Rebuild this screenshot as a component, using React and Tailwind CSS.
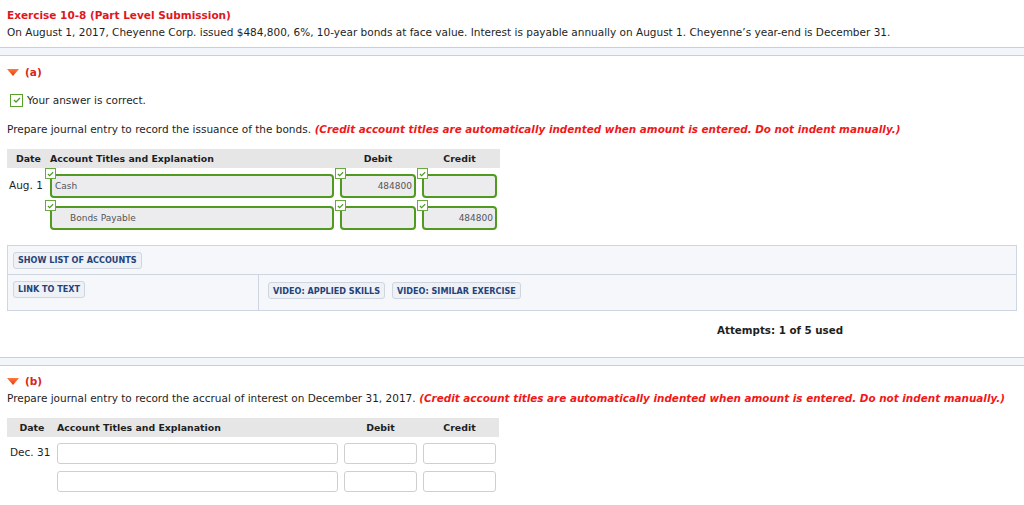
import { Fragment } from 'react';

function Tick({ className = 'w-[7px] h-[6px]' }) {
  return (
    <svg viewBox="0 0 8 6" className={className}>
      <path d="M1 3 L3 5 L7 1" fill="none" stroke="#4f9a25" strokeWidth="1.3" />
    </svg>
  );
}

function Badge() {
  return (
    <span className="absolute -left-[7px] -top-[8px] w-[11px] h-[11px] bg-white border border-[#6aa840] flex items-center justify-center">
      <Tick />
    </span>
  );
}

function Arrow({ label }) {
  return (
    <div className="flex items-center gap-[6px] px-[7px] h-[16px]">
      <svg viewBox="0 0 12 7" className="w-[12px] h-[7px]">
        <defs>
          <linearGradient id={'g' + label} x1="0" y1="0" x2="0" y2="1">
            <stop offset="0" stopColor="#ff7a3a" />
            <stop offset="1" stopColor="#e6360c" />
          </linearGradient>
        </defs>
        <path d="M0 0 L12 0 L6 7 Z" fill={'url(#g' + label + ')'} />
      </svg>
      <span className="font-bold text-[#d8241c]">({label})</span>
    </div>
  );
}

function Separator({ className = '' }) {
  return <div className={'h-[9px] border-y border-[#c6d0dc] bg-[#f2f5f9] ' + className} />;
}

function Note() {
  return (
    <span className="font-bold italic text-[#f01818] text-[10.4px]">
      {' '}(Credit account titles are automatically indented when amount is entered. Do not indent manually.)
    </span>
  );
}

function GreenBox({ className, children }) {
  return (
    <div className={'relative h-[24px] rounded-[4px] border-2 border-[#4f9a1f] bg-[#ececee] text-[9px] text-[#555] flex items-center ' + className}>
      <Badge />
      {children}
    </div>
  );
}

function PlainBox({ className }) {
  return <div className={'h-[21px] rounded-[3px] border border-[#cfcfcf] bg-white ' + className} />;
}

function Btn({ children }) {
  return (
    <span className="inline-flex items-center h-[17px] px-[4px] rounded-[3px] border border-[#cfd6df] bg-[#eef1f5] text-[8.1px] font-bold text-[#24427a]">
      {children}
    </span>
  );
}

export default function App() {
  const rowsA = [
    { date: 'Aug. 1', acct: 'Cash', indent: false, debit: '484800', credit: '' },
    { date: '', acct: 'Bonds Payable', indent: true, debit: '', credit: '484800' },
  ];

  return (
    <div className="w-[1024px] h-[505px] overflow-hidden bg-white text-[10.5px] leading-[16px] text-[#1e1e1e] font-['DejaVu_Sans','Liberation_Sans',sans-serif]">
      {/* header */}
      <div className="px-[7px] pt-[7px]">
        <div className="font-bold text-[#e0161c]">Exercise 10-8 (Part Level Submission)</div>
        <div className="mt-[1px]">
          On August 1, 2017, Cheyenne Corp. issued $484,800, 6%, 10-year bonds at face value. Interest is payable annually on August 1. Cheyenne’s year-end is December 31.
        </div>
      </div>

      <Separator className="mt-[7px]" />

      {/* part a */}
      <div className="mt-[8px]">
        <Arrow label="a" />
      </div>

      <div className="mt-[12px] px-[10px] flex items-center gap-[4px]">
        <span className="w-[13px] h-[13px] border border-[#5aa02c] bg-white flex items-center justify-center">
          <Tick className="w-[8px] h-[6px]" />
        </span>
        <span>Your answer is correct.</span>
      </div>

      <div className="mt-[13px] px-[7px]">
        Prepare journal entry to record the issuance of the bonds.
        <Note />
      </div>

      <div className="mt-[12px] ml-[7px] w-[493px]">
        <div className="h-[19px] bg-[#e6e6e6] flex items-center font-bold text-[9.4px]">
          <span className="w-[43px] text-center">Date</span>
          <span className="w-[290px]">Account Titles and Explanation</span>
          <span className="w-[76px] text-center">Debit</span>
          <span className="w-[81px] pl-[6px] text-center">Credit</span>
        </div>
        <div className="flex flex-col gap-[8px] mt-[6px]">
          {rowsA.map((r, i) => (
            <div key={i} className="flex items-center">
              <span className="w-[43px] pl-[2px] -mt-[3px]">{r.date}</span>
              <GreenBox className={'w-[284px] ' + (r.indent ? 'pl-[18px]' : 'pl-[3px]')}>{r.acct}</GreenBox>
              <GreenBox className="ml-[6px] w-[76px] justify-end pr-[2px]">{r.debit}</GreenBox>
              <GreenBox className="ml-[6px] w-[75px] justify-end pr-[2px]">{r.credit}</GreenBox>
            </div>
          ))}
        </div>
      </div>

      {/* tools panel */}
      <div className="mt-[15px] mx-[7px] border border-[#cdd6e1] bg-[#f5f7fa]">
        <div className="h-[29px] px-[5px] pt-[5px] border-b border-[#cdd6e1]">
          <Btn>SHOW LIST OF ACCOUNTS</Btn>
        </div>
        <div className="flex h-[35px]">
          <div className="w-[251px] px-[5px] pt-[5px] border-r border-[#cdd6e1]">
            <Btn>LINK TO TEXT</Btn>
          </div>
          <div className="pl-[9px] pt-[7px] flex gap-[7px] items-start">
            <Btn>VIDEO: APPLIED SKILLS</Btn>
            <Btn>VIDEO: SIMILAR EXERCISE</Btn>
          </div>
        </div>
      </div>

      <div className="mt-[11px] pl-[717px] font-bold text-[10.3px]">Attempts: 1 of 5 used</div>

      <Separator className="mt-[19px]" />

      {/* part b */}
      <div className="mt-[7px]">
        <Arrow label="b" />
      </div>
      <div className="mt-[1px] px-[7px]">
        Prepare journal entry to record the accrual of interest on December 31, 2017.
        <Note />
      </div>

      <div className="mt-[12px] ml-[7px] w-[492px]">
        <div className="h-[19px] bg-[#e6e6e6] flex items-center font-bold text-[9.4px]">
          <span className="w-[50px] text-center">Date</span>
          <span className="w-[287px]">Account Titles and Explanation</span>
          <span className="w-[73px] text-center">Debit</span>
          <span className="w-[79px] pl-[6px] text-center">Credit</span>
        </div>
        <div className="flex flex-col gap-[7px] mt-[6px]">
          {['Dec. 31', ''].map((d, i) => (
            <Fragment key={i}>
              <div className="flex items-center">
                <span className="w-[50px] pl-[3px] -mt-[4px]">{d}</span>
                <PlainBox className="w-[281px]" />
                <PlainBox className="ml-[6px] w-[73px]" />
                <PlainBox className="ml-[6px] w-[73px]" />
              </div>
            </Fragment>
          ))}
        </div>
      </div>
    </div>
  );
}
